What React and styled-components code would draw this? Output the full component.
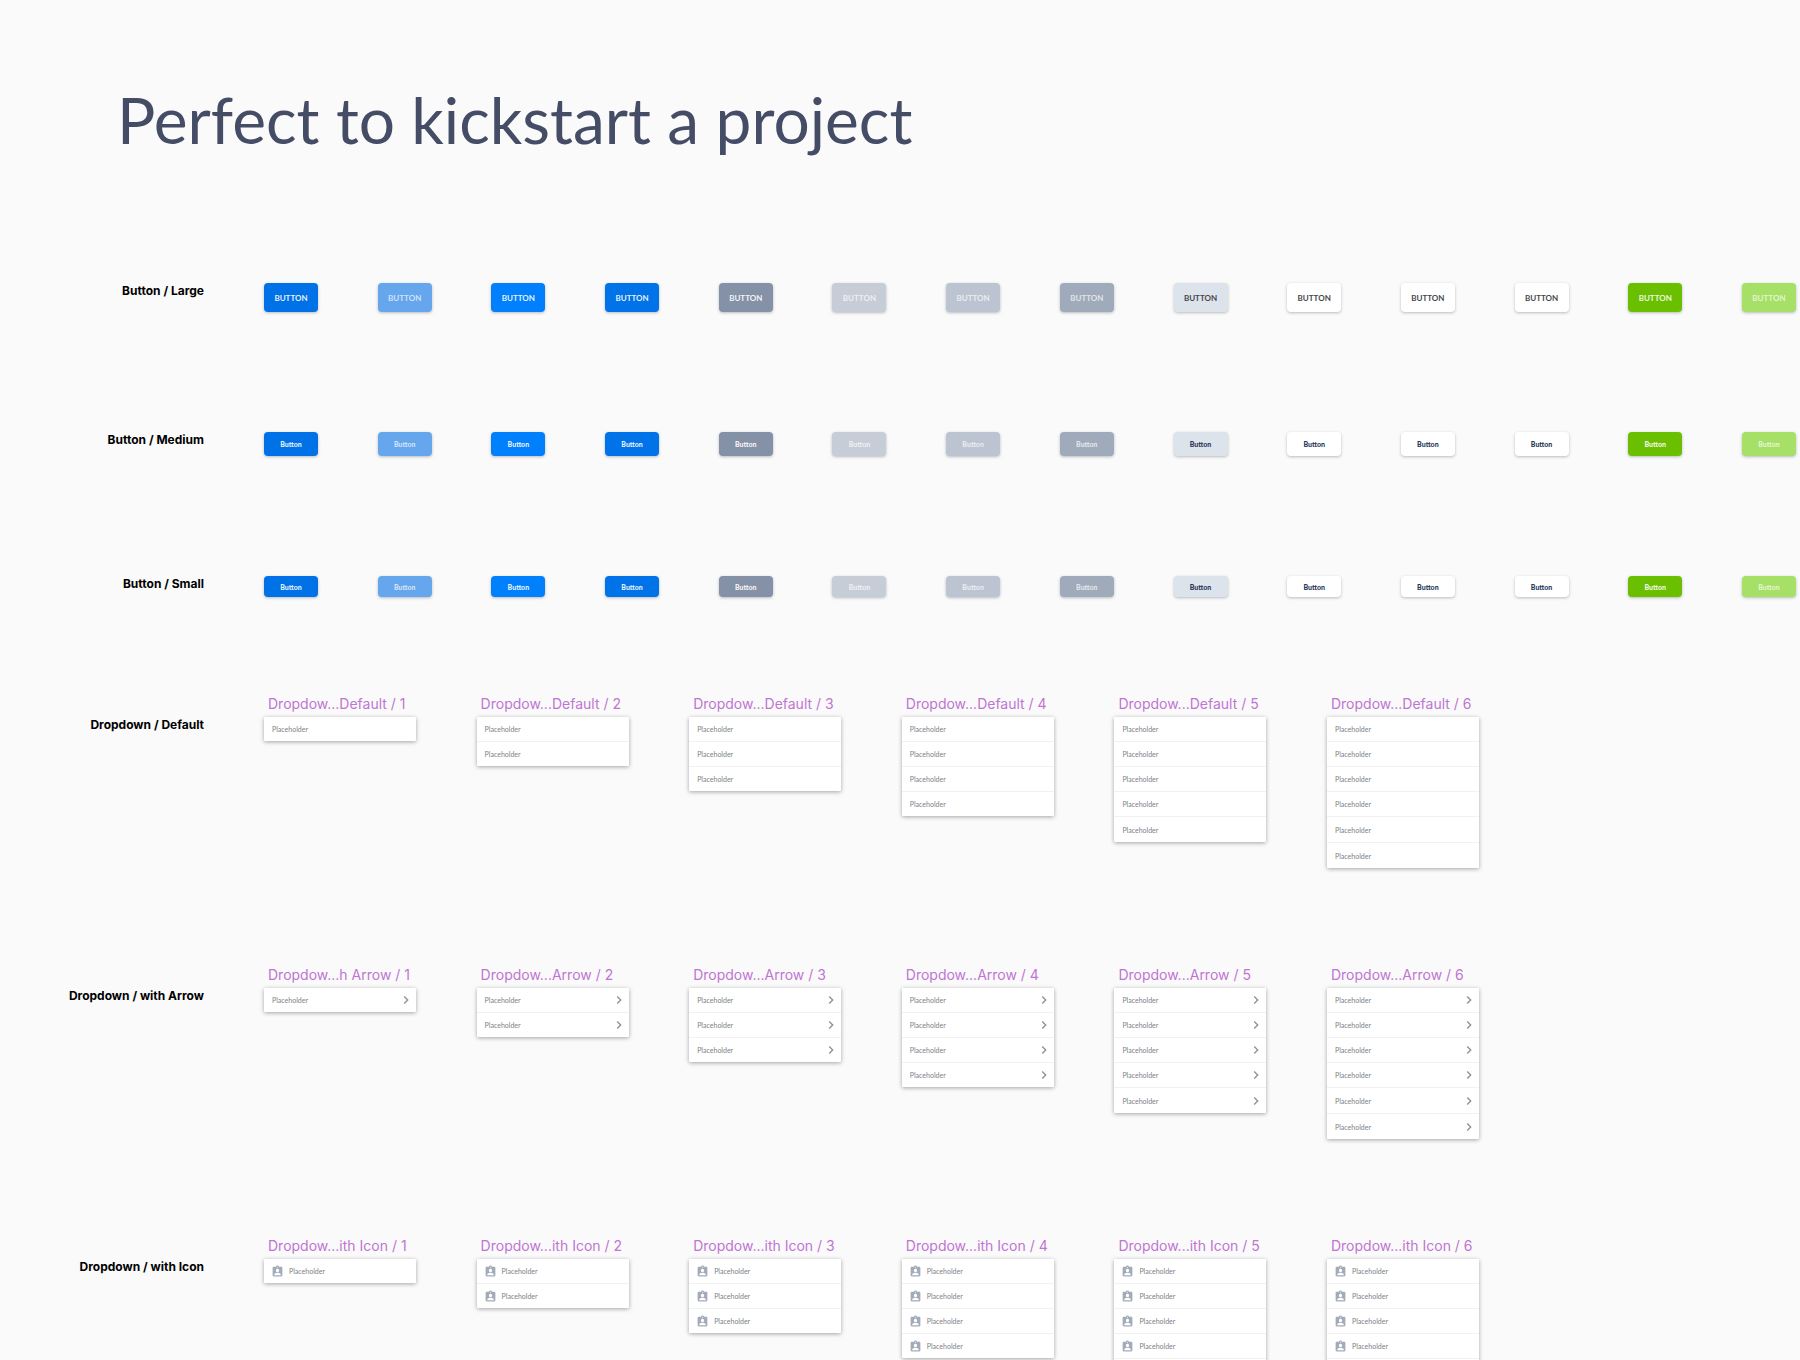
import React from "react";
import styled, { createGlobalStyle } from "styled-components";
import { MdAssignmentInd, MdChevronRight } from "react-icons/md";

const GlobalStyle = createGlobalStyle`
  body {
    margin: 0;
    background: #fafafa;
  }
`

const Page = styled.main`
  min-height: 100vh;
  background: #fafafa;
  font-family: Inter, "Liberation Sans", sans-serif;
`

const Title = styled.h1`
  margin: 0;
  padding: 80px 0 123px 117px;
  color: #454c66;
  font-family: Lato, "Open Sans", sans-serif;
  font-size: 64px;
  font-weight: 400;
  line-height: 80px;
`

const Section = styled.section`
  display: grid;
  grid-template-columns: 204px 1fr;
  column-gap: 60px;
  margin-bottom: ${props => props.$gap}px;
`

const SectionName = styled.h2`
  margin: 0;
  padding-top: ${props => props.$offset}px;
  color: #000;
  font-size: 12px;
  font-weight: 700;
  line-height: 16px;
  text-align: right;
  white-space: nowrap;
`

const ButtonRow = styled.div`
  display: flex;
  justify-content: space-between;
  padding-right: 4px;
`

const HEIGHTS = { large: 29, medium: 24, small: 21 }

const Button = styled.button`
& {
  width: 54px;
  height: ${props => HEIGHTS[props.$size]}px;
  padding: 0;
  border: none;
  border-radius: 4px;
  background: ${props => props.$bg};
  color: ${props => props.$color};
  box-shadow: 0 1px 3px rgba(30, 40, 70, 0.3);
  font-family: Lato, sans-serif;
  font-size: ${props => props.$size === 'large' ? 8 : 7}px;
  font-weight: ${props => props.$size === 'large' ? 700 : 900};
  line-height: 10px;
  cursor: pointer;
}

&:hover {
  filter: brightness(1.05);
}
`

const MenuRow = styled.div`
  display: flex;
  justify-content: space-between;
  align-items: flex-start;
  max-width: 1215px;
`

const Menu = styled.div`
  width: 152px;
`

const MenuName = styled.h3`
  margin: 0 0 4px 4px;
  color: #bf75d3;
  font-size: 14px;
  font-weight: 400;
  line-height: 18px;
  white-space: nowrap;
`

const MenuList = styled.ul`
  margin: 0;
  padding: 0;
  list-style: none;
  border-radius: 1px;
  background: #fff;
  box-shadow: 0 1px 4px rgba(0, 0, 0, 0.35);
`

const MenuItem = styled.li`
  box-sizing: border-box;
  height: 25px;
  border-top: 1px solid #f1f1f1;

  &:first-child {
    height: 24px;
    border-top: none;
  }

  &:nth-child(n + 5) {
    height: 26px;
  }
`

const MenuButton = styled.button`
& {
  display: flex;
  align-items: center;
  width: 100%;
  height: 100%;
  padding: 0 2px 0 8px;
  border: none;
  background: none;
  color: #7d8187;
  font-family: Lato, sans-serif;
  font-size: 7px;
  line-height: 10px;
  text-align: left;
  cursor: pointer;
}

&:hover {
  background: #f7f9fb;
}
`

const PersonIcon = styled(MdAssignmentInd)`
  width: 13px;
  height: 13px;
  margin: 0 5px 0 -1px;
  color: #a3abb9;
`

const Arrow = styled(MdChevronRight)`
  width: 16px;
  height: 16px;
  margin-left: auto;
  color: #8d9299;
`

const SOFT = 'rgba(255, 255, 255, 0.7)'
const STRONG = 'rgba(255, 255, 255, 0.92)'

const VARIANTS = [
  { bg: '#0071e6', color: STRONG },
  { bg: '#66a6ec', color: SOFT },
  { bg: '#0080fc', color: STRONG },
  { bg: '#0073e8', color: STRONG },
  { bg: '#8591a7', color: STRONG },
  { bg: '#c6cdd7', color: SOFT },
  { bg: '#bcc4d1', color: SOFT },
  { bg: '#9fabbb', color: SOFT },
  { bg: '#dde3eb', dark: true },
  { bg: '#ffffff', dark: true },
  { bg: '#ffffff', dark: true },
  { bg: '#ffffff', dark: true },
  { bg: '#6abf00', color: STRONG },
  { bg: '#a6e066', color: SOFT },
]

const BUTTONS = [
  { name: 'Button / Large', size: 'large', text: 'BUTTON', dark: '#44474d', gap: 120 },
  { name: 'Button / Medium', size: 'medium', text: 'Button', dark: '#253858', gap: 120 },
  { name: 'Button / Small', size: 'small', text: 'Button', dark: '#253858', gap: 98 },
]

const COUNTS = [1, 2, 3, 4, 5, 6]

const DROPDOWNS = [
  { name: 'Dropdown / Default', title: n => `Dropdow...Default / ${n}` },
  { name: 'Dropdown / with Arrow', arrow: true, title: n => `Dropdow...${n === 1 ? 'h ' : ''}Arrow / ${n}` },
  { name: 'Dropdown / with Icon', icon: true, title: n => `Dropdow...ith Icon / ${n}` },
]

const ButtonSection = ({ name, size, text, dark, gap }) => (
  <Section $gap={gap}>
    <SectionName $offset={0}>{name}</SectionName>
    <ButtonRow>
      {VARIANTS.map((v, i) => (
        <Button key={i} type="button" $size={size} $bg={v.bg} $color={v.dark ? dark : v.color}>
          {text}
        </Button>
      ))}
    </ButtonRow>
  </Section>
)

const DropdownSection = ({ name, title, icon, arrow }) => (
  <Section $gap={98}>
    <SectionName $offset={22}>{name}</SectionName>
    <MenuRow>
      {COUNTS.map((count) => (
        <Menu key={count}>
          <MenuName>{title(count)}</MenuName>
          <MenuList>
            {COUNTS.slice(0, count).map((n) => (
              <MenuItem key={n}>
                <MenuButton type="button">
                  {icon ? <PersonIcon /> : null}
                  Placeholder
                  {arrow ? <Arrow /> : null}
                </MenuButton>
              </MenuItem>
            ))}
          </MenuList>
        </Menu>
      ))}
    </MenuRow>
  </Section>
)

const App = () => (
  <Page>
    <GlobalStyle />
    <Title>Perfect to kickstart a project</Title>
    {BUTTONS.map((b) => <ButtonSection key={b.name} {...b} />)}
    {DROPDOWNS.map((d) => <DropdownSection key={d.name} {...d} />)}
  </Page>
)

export default App;
